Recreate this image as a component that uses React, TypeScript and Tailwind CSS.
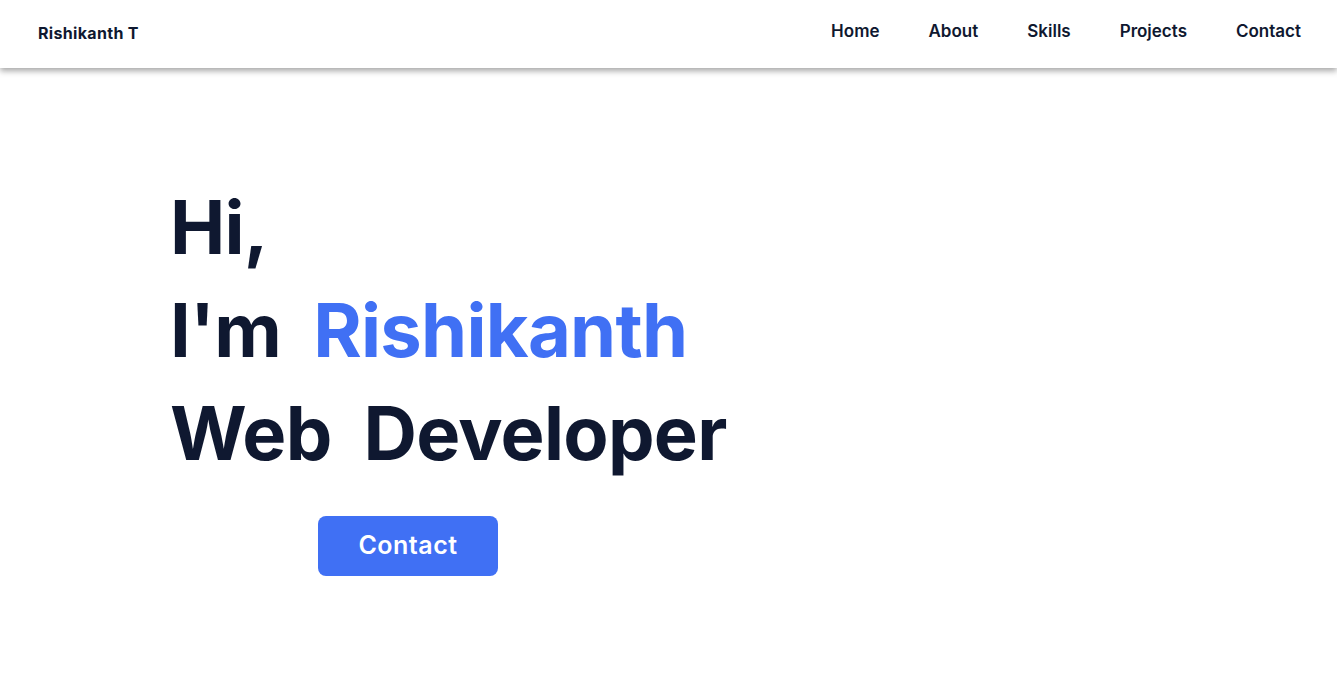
const navLinks = ['Home', 'About', 'Skills', 'Projects', 'Contact'];

const Header = () => (
  <header className="h-[68px] bg-white flex items-center justify-between pl-[38px] pr-[36px] shadow-[0_3px_6px_rgba(0,0,0,0.35)] relative z-10">
    <span className="text-[16px] font-bold tracking-[0.02em] text-[#0f1830] pb-[2px]">Rishikanth T</span>
    <nav className="flex items-center gap-[49px] pb-[5px]">
      {navLinks.map((link) => (
        <a key={link} href="#" className="text-[17px] font-semibold text-[#0f1830]">
          {link}
        </a>
      ))}
    </nav>
  </header>
);

const Hero = () => (
  <section className="pl-[170px] pt-[108px]">
    <h1 className="text-[74px] font-bold leading-[103px] tracking-[-0.01em] text-[#0f1830]">
      <div>Hi,</div>
      <div className="flex gap-[32px]">
        <span>I'm</span>
        <span className="text-[#4070f4]">Rishikanth</span>
      </div>
      <div className="flex gap-[32px]">
        <span>Web</span>
        <span>Developer</span>
      </div>
    </h1>
    <button className="mt-[31px] ml-[148px] w-[180px] h-[60px] rounded-[8px] bg-[#4070f4] text-white text-[25px] font-semibold tracking-[0.02em]">
      Contact
    </button>
  </section>
);

export default function App() {
  return (
    <div className="min-h-screen bg-white font-['Inter',sans-serif]">
      <Header />
      <Hero />
    </div>
  );
}
